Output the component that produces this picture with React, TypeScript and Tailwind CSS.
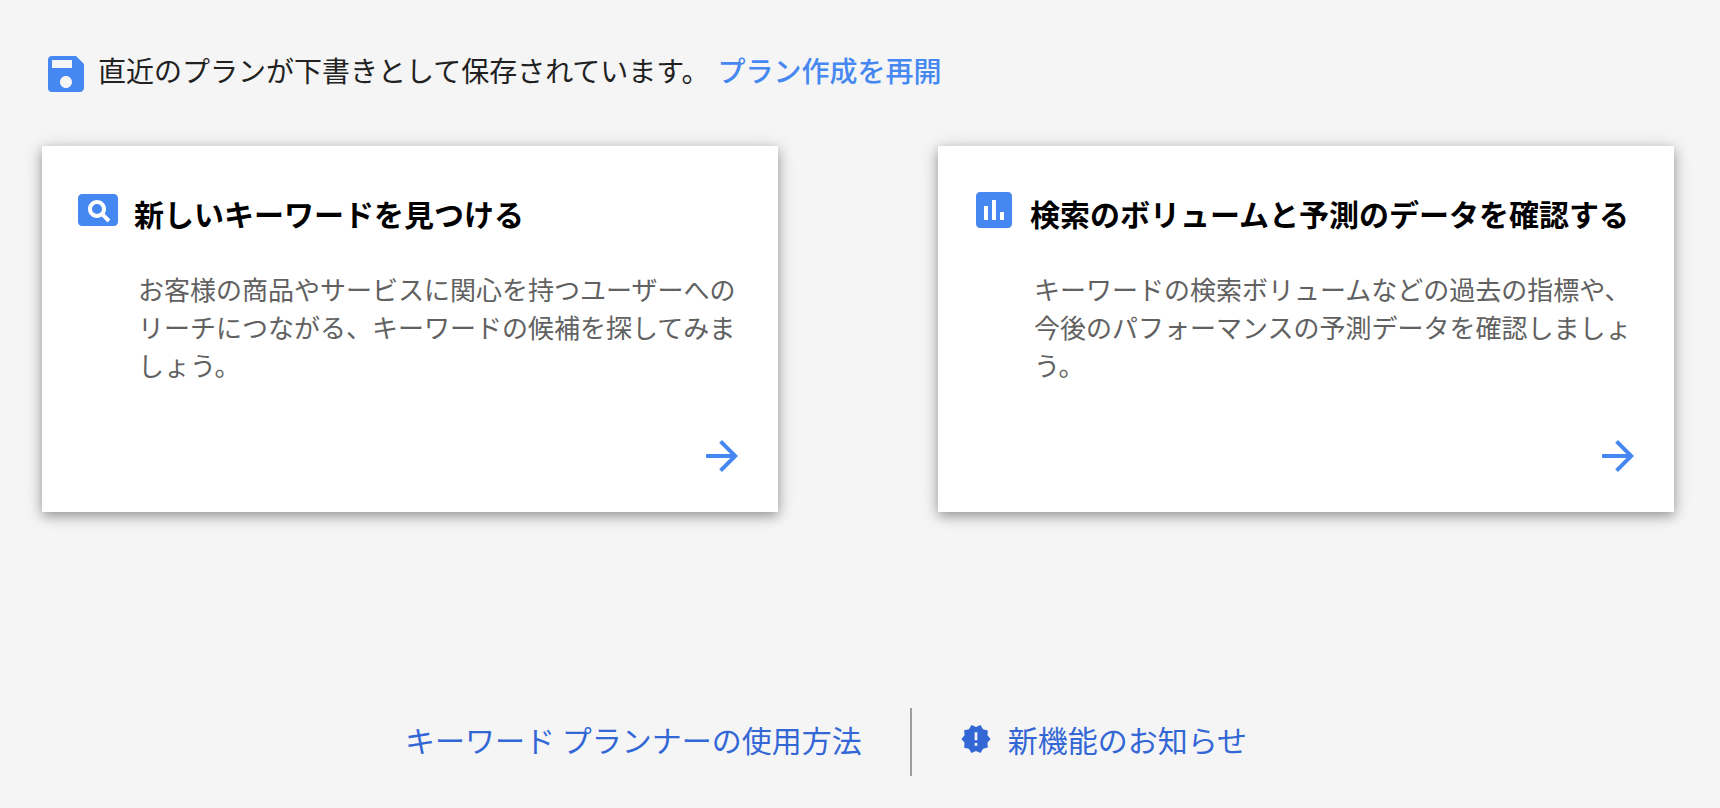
import type { IconType } from "react-icons"
import { MdArrowForward, MdAssessment, MdNewReleases, MdPageview, MdSave } from "react-icons/md"

interface ICard {
  icon: IconType
  title: string
  description: string
}

const cards: ICard[] = [
  {
    icon: MdPageview,
    title: "新しいキーワードを見つける",
    description:
      "お客様の商品やサービスに関心を持つユーザーへのリーチにつながる、キーワードの候補を探してみましょう。",
  },
  {
    icon: MdAssessment,
    title: "検索のボリュームと予測のデータを確認する",
    description:
      "キーワードの検索ボリュームなどの過去の指標や、今後のパフォーマンスの予測データを確認しましょう。",
  },
]

const DraftNotice = () => {
  return (
    <div className="flex items-start gap-2 text-[28px] leading-[40px]">
      <MdSave className="size-12 shrink-0 text-[#4688f1]" />
      <p className="text-[#212121]">
        直近のプランが下書きとして保存されています。
        <a href="#resume" className="ml-2 font-medium text-[#4688f1]">
          プラン作成を再開
        </a>
      </p>
    </div>
  )
}

const PlanCard = ({ icon: Icon, title, description }: ICard) => {
  return (
    <a
      href="#plan"
      className="flex flex-col bg-white px-8 pt-10 pb-8 shadow-[0_4px_12px_rgba(0,0,0,0.38),0_0_24px_rgba(0,0,0,0.06)]"
    >
      <div className="flex items-start gap-3">
        <Icon className="size-12 shrink-0 text-[#4688f1]" />
        <h2 className="text-[30px] leading-[54px] font-bold text-black">{title}</h2>
      </div>
      <p className="mt-[30px] pr-1 pl-16 text-[26px] leading-[38px] text-[#616161]">{description}</p>
      <MdArrowForward className="mt-12 size-12 self-end text-[#4688f1]" />
    </a>
  )
}

const FooterLinks = () => {
  return (
    <nav className="mt-[196px] flex justify-center pr-16 text-[30px] leading-[62px] text-[#3367d6]">
      <a href="#guide" className="pr-12 pb-1.5">
        キーワード プランナーの使用方法
      </a>
      <a href="#news" className="flex items-center gap-4 border-l-2 border-[#9e9e9e] pb-1.5 pl-12">
        <MdNewReleases className="size-8" />
        新機能のお知らせ
      </a>
    </nav>
  )
}

export default function App() {
  return (
    <main
      lang="ja"
      className="min-h-screen bg-[#f5f5f5] pt-[50px] pr-[46px] pb-8 pl-[42px] font-['Noto_Sans_CJK_JP',sans-serif]"
    >
      <DraftNotice />
      <div className="mt-12 grid grid-cols-2 gap-40">
        {cards.map((card) => (
          <PlanCard key={card.title} {...card} />
        ))}
      </div>
      <FooterLinks />
    </main>
  )
}
